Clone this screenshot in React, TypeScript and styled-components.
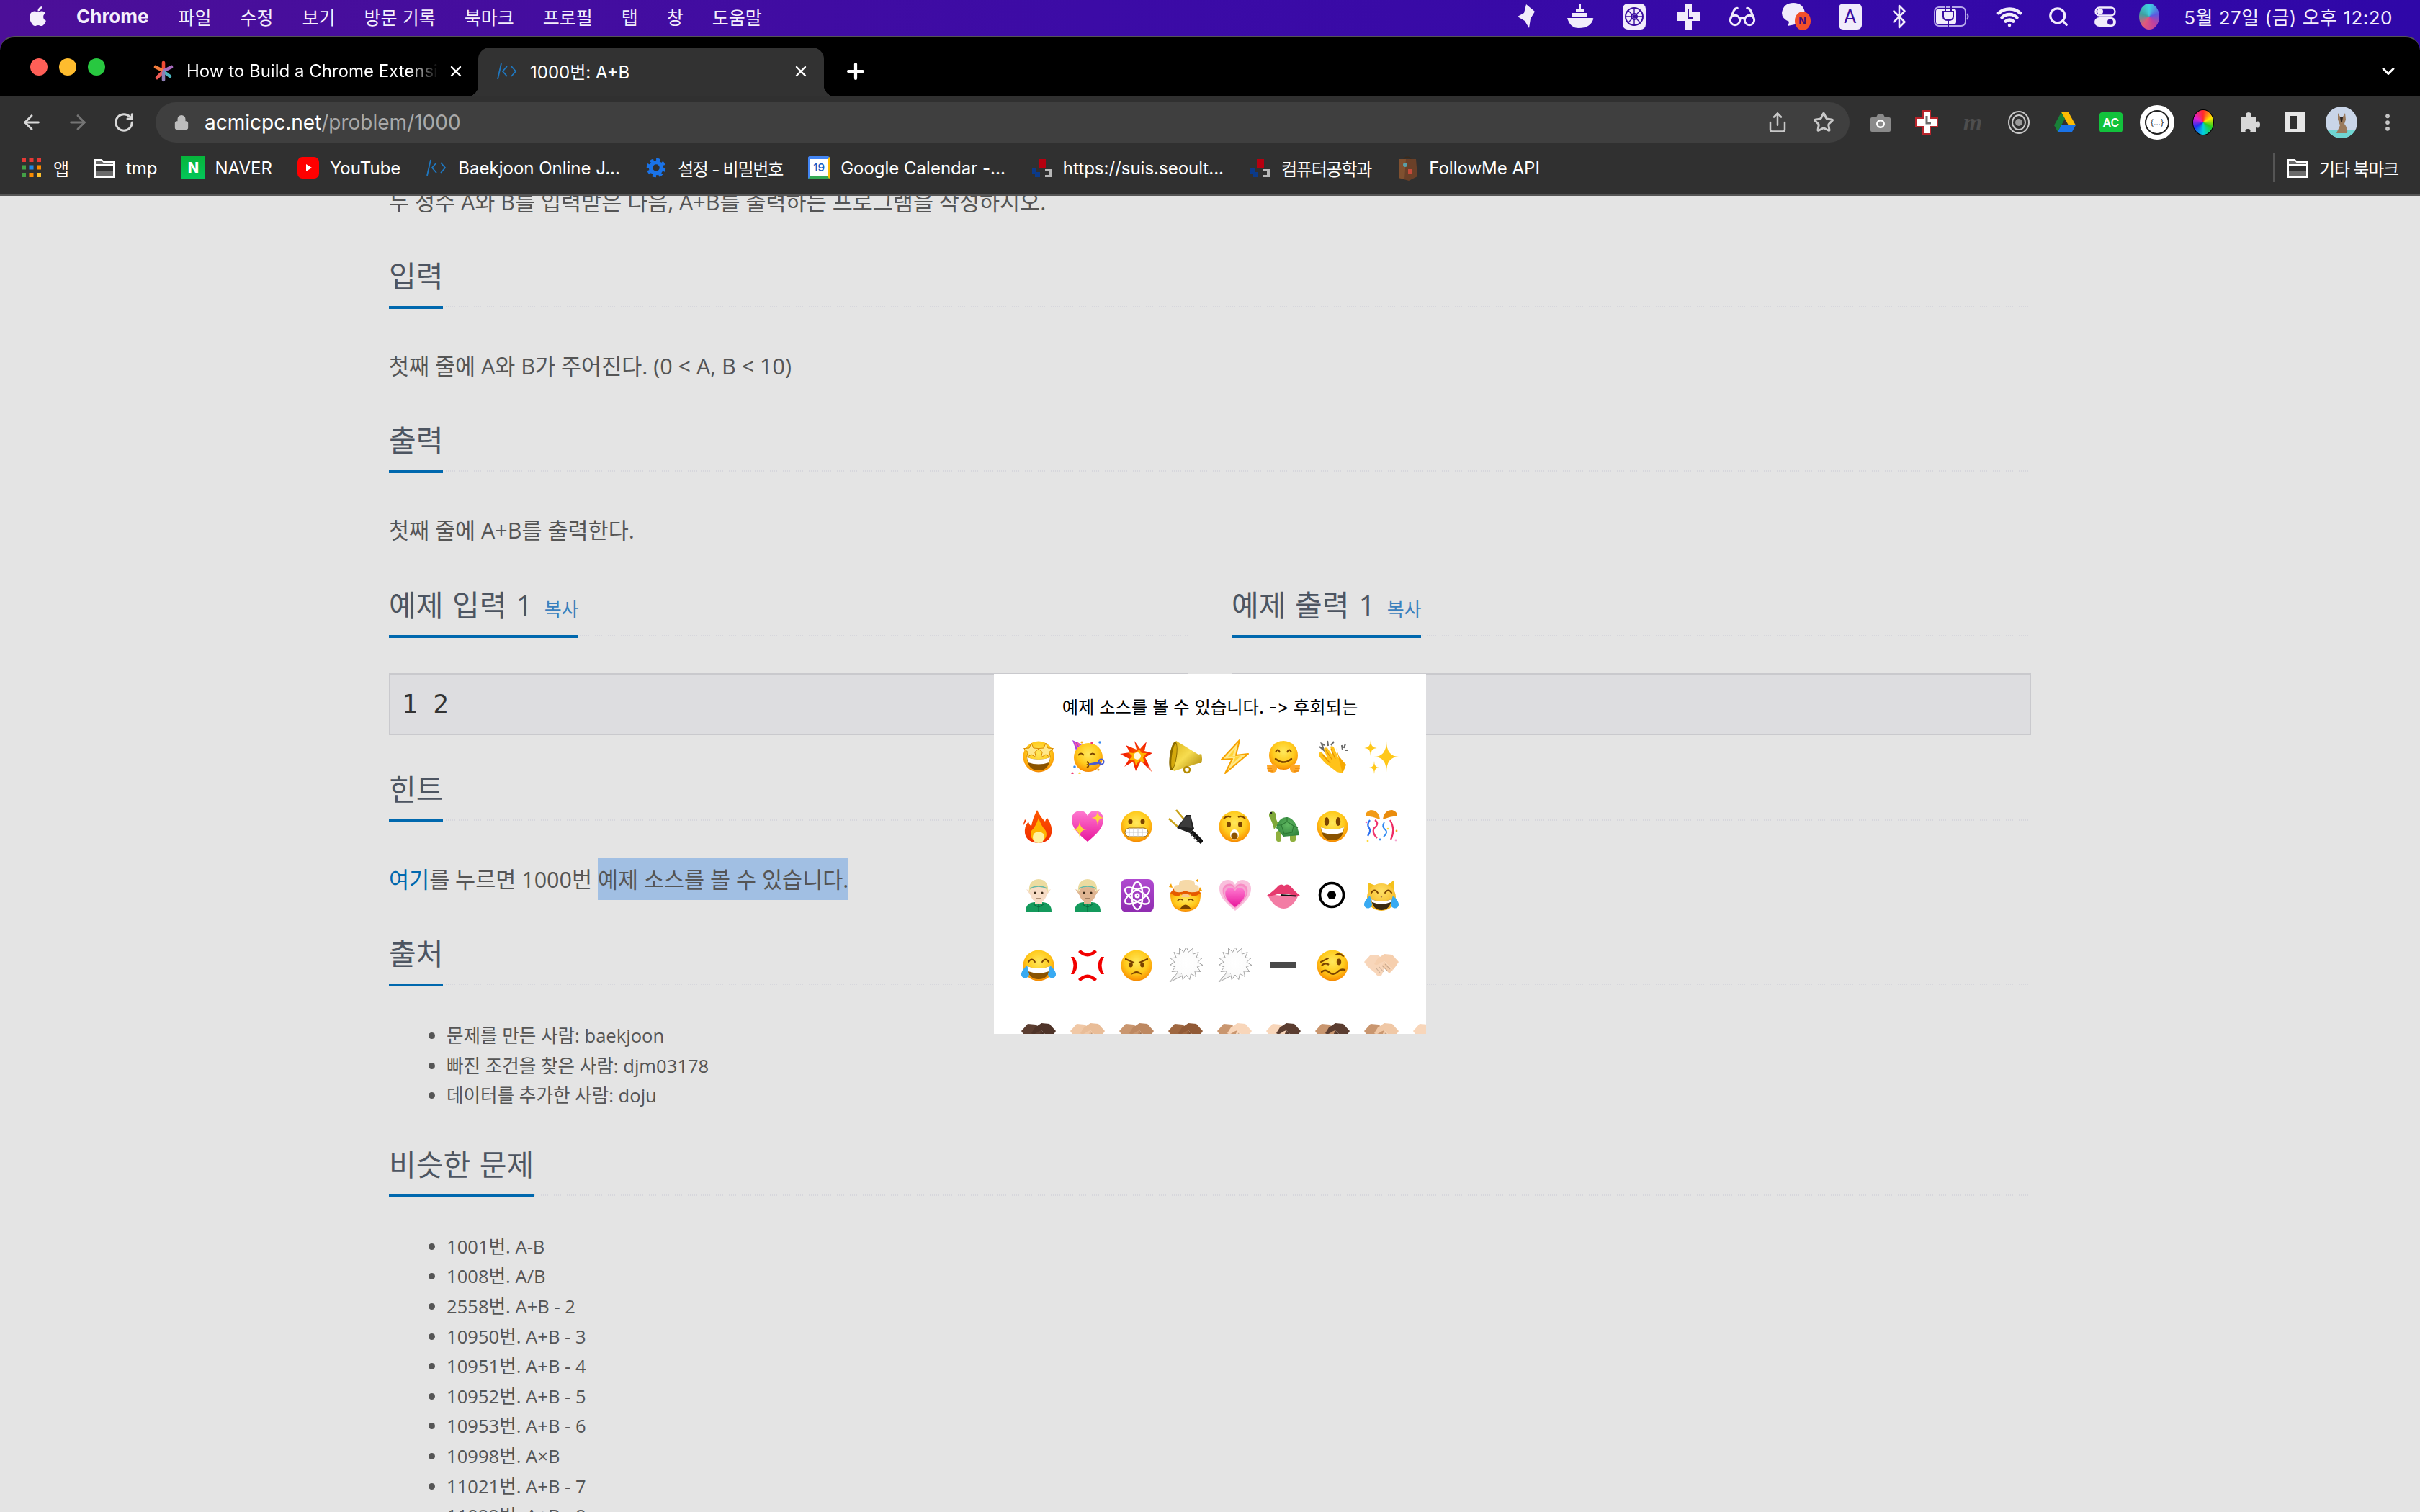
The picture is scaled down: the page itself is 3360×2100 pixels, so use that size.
import React from "react";
import styled, { createGlobalStyle } from "styled-components";
import { FaApple } from "react-icons/fa";
import {
  ArrowLeft,
  ArrowRight,
  Bluetooth,
  ChevronDown,
  EllipsisVertical,
  Glasses,
  Lock,
  Plus,
  RotateCw,
  Search,
  Share,
  Star,
  Wifi,
  X,
} from "lucide-react";

const UI_FONT = `"Inter", "Noto Sans CJK KR", sans-serif`;
const PAGE_FONT = `"Open Sans", "Noto Sans CJK KR", sans-serif`;

const GlobalStyle = createGlobalStyle`
  html, body {
    margin: 0;
    padding: 0;
    background: #e4e4e4;
  }
  * {
    box-sizing: border-box;
  }
`;

const pts = (cx: number, cy: number, R: number, r: number, n: number, rot = -90) =>
  Array.from({ length: n * 2 }, (_, i) => {
    const a = ((rot + (i * 180) / n) * Math.PI) / 180;
    const d = i % 2 ? r : R;
    return `${(cx + d * Math.cos(a)).toFixed(1)},${(cy + d * Math.sin(a)).toFixed(1)}`;
  }).join(" ");

const sparkle = (x: number, y: number, R: number) =>
  `M${x} ${y - R}Q${x} ${y} ${x + R * 0.8} ${y}Q${x} ${y} ${x} ${y + R}Q${x} ${y} ${x - R * 0.8} ${y}Q${x} ${y} ${x} ${y - R}Z`;

const HEART =
  "M24 45C8 32 2 24 2 14C2 6 8 2 14 2C19 2 22 5 24 9C26 5 29 2 34 2C40 2 46 6 46 14C46 24 40 32 24 45Z";

const BROWN = "#7a4300";

function Em({ children }: { children: React.ReactNode }) {
  return (
    <svg width="48" height="48" viewBox="0 0 48 48">
      {children}
    </svg>
  );
}

function Face({ children }: { children: React.ReactNode }) {
  return (
    <Em>
      <circle cx="24" cy="24" r="21.5" fill="url(#faceG)" />
      {children}
    </Em>
  );
}

const ArcEyes = ({ y = 19 }: { y?: number }) => (
  <path
    d={`M10 ${y}Q14.5 ${y - 7} 19 ${y}M29 ${y}Q33.5 ${y - 7} 38 ${y}`}
    fill="none"
    stroke={BROWN}
    strokeWidth="2"
    strokeLinecap="round"
  />
);

const OpenMouth = () => (
  <>
    <path d="M8 25Q24 31 40 25Q39 43 24 43Q9 43 8 25Z" fill="#8a5300" />
    <path d="M8 25Q24 31 40 25L38.5 32Q24 37 9.5 32Z" fill="#fff" />
  </>
);

const Tears = () => (
  <path d="M8 24Q10 30 10 33A5.5 5.5 0 1 1 0 35Q1 30 8 24ZM40 24Q38 30 38 33A5.5 5.5 0 1 0 48 35Q47 30 40 24Z" fill="#38aaf2" />
);

function Handshake({ a, b }: { a: string; b: string }) {
  return (
    <Em>
      <path d="M0 19L9 9L20 10L28 17L30 25L24 38Q18 40 15 34L5 26Z" fill={a} />
      <path d="M48 19L39 9L28 8L19 14L14 22Q18 25 23 20L28 18L40 30L44 25Z" fill={b} />
      <path d="M28 18L40 30L35 35L25 25Z" fill={b} />
      <path d="M17 28L22 34M21 26L27 33M25 24L32 31M29 22L36 29" stroke="#00000030" strokeWidth="1.1" />
    </Em>
  );
}

function Elf({ skin }: { skin: string }) {
  return (
    <Em>
      <path d="M6 46Q6 34 18 33H30Q42 34 42 46Z" fill="#149a5c" />
      <path d="M24 34V46M17 36L24 40L31 36" stroke="#0b6e41" strokeWidth="1.2" fill="none" />
      <path d="M7 15L14 18V25ZM41 15L34 18V25Z" fill={skin} />
      <rect x="19" y="26" width="10" height="10" fill={skin} />
      <ellipse cx="24" cy="20" rx="11.5" ry="13" fill={skin} />
      <path d="M11 20Q9 2 24 1Q39 2 37 20Q35 12 24 12Q13 12 11 20Z" fill="#ecdca0" />
      <path d="M12 14Q24 8 36 14" stroke="#65b8a8" strokeWidth="1.4" fill="none" />
      <circle cx="19" cy="20" r="1.6" fill="#3b2a18" />
      <circle cx="29" cy="20" r="1.6" fill="#3b2a18" />
      <path d="M21 28H27" stroke="#7a5a40" strokeWidth="1.2" />
    </Em>
  );
}

function Balloon() {
  return (
    <Em>
      <polygon points={pts(25, 21, 23, 16, 15)} fill="url(#balloonG)" stroke="#9a9a9a" strokeWidth="0.9" />
      <path d="M13 33L2 47L21 37Z" fill="#f4f4f4" />
      <path d="M13 34L2 47L20 38" fill="none" stroke="#9a9a9a" strokeWidth="0.9" />
    </Em>
  );
}

function MinusSign() {
  return (
    <Em>
      <rect x="6" y="19" width="36" height="9" fill="#4a4a4a" />
    </Em>
  );
}

const rowOne = [
  <Face key="star">
    <OpenMouth />
    <polygon points={pts(14, 16, 11, 5, 5)} fill="#ffe88a" stroke="#d98a00" strokeWidth="1" />
    <polygon points={pts(34, 16, 11, 5, 5)} fill="#ffe88a" stroke="#d98a00" strokeWidth="1" />
  </Face>,
  <Em key="party">
    <circle cx="25" cy="25" r="20" fill="url(#faceG)" />
    <path d="M3 1L16 7Q10 10 8 15Z" fill="#a83be0" />
    <path d="M6 3.5L10 11M10 4L12.5 9" stroke="#f45ba8" strokeWidth="1.8" />
    <path d="M11 22Q15 17 19 22M27 22Q31 17 35 22" fill="none" stroke={BROWN} strokeWidth="2" />
    <path d="M23 31Q27 33 24 35Q27 37 23 39" fill="none" stroke={BROWN} strokeWidth="2" />
    <path d="M26 35L42 32" stroke="#4a5bd0" strokeWidth="3" />
    <circle cx="43" cy="31" r="3.5" fill="none" stroke="#4a5bd0" strokeWidth="2" />
    <circle cx="6" cy="38" r="1.8" fill="#3a8af0" />
    <circle cx="3" cy="47" r="1.6" fill="#ef3b70" />
    <circle cx="16" cy="4" r="1.6" fill="#f5a623" />
    <circle cx="30" cy="5" r="1.8" fill="#ef3b70" />
    <circle cx="41" cy="4" r="1.8" fill="#3a8af0" />
    <circle cx="13" cy="47" r="1.6" fill="#ffd83a" />
    <circle cx="39" cy="42" r="1.6" fill="#f5a623" />
  </Em>,
  <Em key="boom">
    <polygon points="24,14 21,2 29,13 38,3 35,16 46,19 36,25 46,46 30,30 23,44 19,31 7,38 14,27 1,20 15,18 9,8" fill="url(#boomG)" />
    <polygon points="24,17 28,14 31,19 38,19 33,25 35,33 28,29 23,36 21,28 14,28 18,23 13,18 20,19" fill="#ffb400" />
    <circle cx="25" cy="23" r="5" fill="#fffbe0" />
  </Em>,
  <Em key="mega">
    <path d="M11 2L42 21L46 20Q48 27 46 33L42 33L8 44Q1 34 2 22Q4 8 11 2Z" fill="url(#goldG)" />
    <ellipse cx="7" cy="23" rx="5" ry="20" fill="#8a6a00" transform="rotate(8 7 23)" />
    <ellipse cx="8" cy="23" rx="3" ry="17" fill="#d4a90c" transform="rotate(8 8 23)" />
    <circle cx="26" cy="42" r="4" fill="none" stroke="#b48a00" strokeWidth="2.4" />
  </Em>,
  <Em key="bolt">
    <polygon points="31,1 6,28 21,27 11,47 43,20 26,22" fill="#ffe98a" stroke="#f7a300" strokeWidth="2" strokeLinejoin="round" />
    <polygon points="25,12 15,24 26,23 21,34 33,23 21,24" fill="#ffd53a" />
  </Em>,
  <Em key="hug">
    <circle cx="24" cy="22" r="20" fill="url(#faceG)" />
    <path d="M13 18Q16 11 19 18M29 18Q32 11 35 18" fill="none" stroke={BROWN} strokeWidth="2" />
    <path d="M13 27Q24 36 35 27" fill="none" stroke={BROWN} strokeWidth="2.4" strokeLinecap="round" />
    <path d="M1 36L10 36L9 32L15 38Q16 46 8 46L2 44ZM47 36L38 36L39 32L33 38Q32 46 40 46L46 44Z" fill="#ffa726" />
    <path d="M1 40H8M2 44H9M47 40H40M46 44H39" stroke="#e07b00" strokeWidth="1" />
  </Em>,
  <Em key="clap">
    <path d="M6 10L12 15L9 6L13 8M17 2L18 9M26 3L22 8M37 8L38 14M42 6L40 12M46 15L41 15" stroke="#6a6a6a" strokeWidth="2.2" fill="none" />
    <path d="M6 21Q5 17 9 18L17 26L12 14Q13 10 17 12L24 22L21 10Q24 8 26 11L32 25Q36 32 42 37L38 47L30 45Q21 38 14 33L5 23Z" fill="#ffc21a" />
    <path d="M15 15L24 29M22 13L28 27M10 21L21 33" stroke="#e59000" strokeWidth="1.2" fill="none" />
    <path d="M29 12L33 23Q38 30 43 35L38 47" fill="#f6a800" />
  </Em>,
  <Em key="sparkles">
    <path d={sparkle(31, 24, 22)} fill="#ffc81a" />
    <path d={sparkle(9, 12, 11)} fill="#ffc81a" />
    <path d={sparkle(14, 39, 9)} fill="#ffc81a" />
  </Em>,
];

const rowTwo = [
  <Em key="fire">
    <path d="M22 1Q26 10 33 17Q34 13 36 12Q44 24 42 33Q40 46 24 47Q7 46 5 33Q4 24 10 17Q11 22 14 23Q16 12 22 1Z" fill="url(#fireG)" />
    <path d="M5 14Q3 19 3 22L7 16Z" fill="#f23a00" />
    <path d="M24 12Q27 22 34 30Q38 42 24 46Q10 42 14 30Q20 24 24 12Z" fill="#ffb400" />
    <ellipse cx="24" cy="39" rx="8" ry="8" fill="#fff3a0" />
  </Em>,
  <Em key="sparkheart">
    <path d={HEART} fill="url(#heartG)" />
    <path d={sparkle(13, 28, 13)} fill="#ffd53a" />
    <path d={sparkle(38, 12, 11)} fill="#ffd53a" />
  </Em>,
  <Face key="grimace">
    <ellipse cx="15.5" cy="17" rx="3" ry="3.6" fill={BROWN} />
    <ellipse cx="32.5" cy="17" rx="3" ry="3.6" fill={BROWN} />
    <rect x="8" y="26" width="32" height="12" rx="6" fill="#fff" stroke="#9a6a10" strokeWidth="1" />
    <path d="M8 32H40M14 26V38M20 26V38M26 26V38M32 26V38" stroke="#c4c4c4" strokeWidth="0.9" />
  </Face>,
  <Em key="plug">
    <path d="M11 1L22 14M1 13L13 24" stroke="#c9a21a" strokeWidth="2.6" />
    <path d="M25 8L31 8L36 27L30 33L12 26Z" fill="#222" />
    <path d="M22 12L31 9L33 26L16 24Z" fill="#3c3c3c" />
    <path d="M32 31L47 46" stroke="#111" strokeWidth="6" />
    <path d="M35 33L32 37M39 37L36 41M43 41L40 45" stroke="#444" strokeWidth="2" />
  </Em>,
  <Face key="hushed">
    <path d="M9 13Q14 8 19 11M29 11Q34 8 39 13" fill="none" stroke={BROWN} strokeWidth="2" />
    <ellipse cx="16" cy="21" rx="3" ry="4" fill={BROWN} />
    <ellipse cx="32" cy="21" rx="3" ry="4" fill={BROWN} />
    <ellipse cx="24" cy="35" rx="6" ry="7" fill="#fff" />
    <ellipse cx="24" cy="37" rx="4.6" ry="4.6" fill="#8a5300" />
  </Face>,
  <Em key="turtle">
    <path d="M4 6Q10 0 13 6Q13 14 17 20L11 28Q8 16 4 10Z" fill="#7fa83a" />
    <circle cx="7" cy="5" r="1.3" fill="#222" />
    <rect x="14" y="30" width="7" height="15" rx="3" fill="#8fb03e" />
    <rect x="33" y="34" width="8" height="11" rx="3" fill="#8fb03e" />
    <path d="M14 26Q17 11 29 11Q42 13 46 36L24 38Z" fill="url(#shellG)" />
    <path d="M21 22L29 17L38 23L36 32L25 34ZM29 11V17M38 23L44 26M21 22L15 22" fill="none" stroke="#2d7a34" strokeWidth="1.1" />
  </Em>,
  <Face key="smiley">
    <ellipse cx="16" cy="17" rx="3.2" ry="6" fill={BROWN} />
    <ellipse cx="32" cy="17" rx="3.2" ry="6" fill={BROWN} />
    <OpenMouth />
  </Face>,
  <Em key="confetti">
    <path d="M22 14Q20 1 9 1Q2 3 2 9Q12 10 22 14Z" fill="#f29a14" />
    <path d="M26 14Q28 1 39 1Q46 3 46 9Q36 10 26 14Z" fill="#e98c0c" />
    <path d="M8 15Q3 22 7 26Q10 30 5 37" fill="none" stroke="#2a6ef0" strokeWidth="2.2" />
    <path d="M15 15Q22 20 14 26Q10 32 18 40" fill="none" stroke="#f0356e" strokeWidth="2.2" />
    <path d="M28 18Q24 24 29 28Q34 32 27 38" fill="none" stroke="#2a86f0" strokeWidth="1.8" />
    <path d="M36 15Q44 28 37 42" fill="none" stroke="#ef2b63" strokeWidth="2.2" />
    <circle cx="3" cy="18" r="1.3" fill="#ef6ab0" />
    <circle cx="5" cy="44" r="1.4" fill="#ffd83a" />
    <circle cx="22" cy="42" r="1.4" fill="#3a8af0" />
    <circle cx="45" cy="30" r="1.4" fill="#f5a623" />
    <circle cx="44" cy="43" r="1.4" fill="#f4a6cf" />
    <circle cx="33" cy="27" r="1.3" fill="#ffd83a" />
  </Em>,
];

const rowThree = [
  <Elf key="elf1" skin="#f7dcc6" />,
  <Elf key="elf2" skin="#dfb592" />,
  <Em key="atom">
    <rect x="2" y="1" width="46" height="46" rx="8" fill="url(#atomG)" />
    <g fill="none" stroke="#fff" strokeWidth="2.4" transform="translate(1 0)">
      <ellipse cx="24" cy="24" rx="7.5" ry="19" />
      <ellipse cx="24" cy="24" rx="7.5" ry="19" transform="rotate(60 24 24)" />
      <ellipse cx="24" cy="24" rx="7.5" ry="19" transform="rotate(-60 24 24)" />
      <circle cx="24" cy="24" r="2.4" />
    </g>
  </Em>,
  <Em key="mind">
    <path d="M3 20H45Q46 46 24 46Q2 46 3 20Z" fill="url(#faceG)" />
    <path d="M3 20Q12 28 18 22Q24 30 30 22Q36 28 45 20L40 14H8Z" fill="#e55a00" />
    <path d="M9 18Q5 9 15 9Q14 1 26 2Q38 1 37 9Q45 9 42 18Q30 21 24 17Q16 21 9 18Z" fill="#f6d9a8" />
    <path d="M18 26H30L28 21H20Z" fill="#f9c88a" />
    <path d="M13 31Q16 27 20 30M28 30Q32 27 35 31" fill="none" stroke={BROWN} strokeWidth="1.8" />
    <path d="M16 43Q24 30 32 43Z" fill="#7a4300" />
    <path d="M1 12L4 7L6 13ZM44 12L47 17L42 18ZM38 3L41 1L41 5Z" fill="#f5a000" />
  </Em>,
  <Em key="growheart">
    <g transform="translate(1 0)">
      <path d={HEART} fill="#f9bfdc" />
      <path d={HEART} fill="#f78cc4" transform="translate(5 6) scale(.79)" />
      <path d={HEART} fill="#f4a6d0" transform="translate(7 9) scale(.7)" />
      <path d={HEART} fill="url(#heartG)" transform="translate(9 12) scale(.62)" />
    </g>
  </Em>,
  <Em key="lips">
    <path d="M1 24Q12 16 17 10Q21 7 25 10Q29 7 33 10Q38 16 47 24Q40 26 24 21Q8 26 1 24Z" fill="#e63a6e" />
    <path d="M3 25Q14 22 25 23Q38 23 44 25Q36 42 24 42Q12 42 3 25Z" fill="#f37ca4" />
    <path d="M12 23Q24 18 40 25Q28 25 12 23Z" fill="#fff" />
    <path d="M20 23Q30 24 42 24.5" fill="none" stroke="#111" strokeWidth="1.8" />
  </Em>,
  <Em key="dot">
    <circle cx="23" cy="23" r="16.5" fill="none" stroke="#000" strokeWidth="3.6" />
    <circle cx="23" cy="23" r="6" fill="#000" />
  </Em>,
  <Em key="cat">
    <path d="M6 6L18 11L30 11L42 2L42 20L6 20Z" fill="#f5c11c" />
    <ellipse cx="24" cy="26" rx="20" ry="19" fill="url(#catG)" />
    <ArcEyes y={20} />
    <path d="M22 24H26L24 27Z" fill="#a3704a" />
    <path d="M10 29Q24 35 38 29Q36 44 24 44Q12 44 10 29Z" fill="#3a2a10" />
    <path d="M10 29Q24 35 38 29L37 33Q24 38 11 33Z" fill="#fff" />
    <Tears />
  </Em>,
];

const rowFour = [
  <Face key="joy">
    <ArcEyes />
    <OpenMouth />
    <Tears />
  </Face>,
  <Em key="anger">
    <path d="M14 2Q24 11 34 2L37 5Q24 18 11 5ZM14 46Q24 37 34 46L37 43Q24 30 11 43Z" fill="#f20000" />
    <path d="M5 12Q14 24 5 36L1 36Q8 24 1 12ZM43 12Q34 24 43 36L47 36Q40 24 47 12Z" fill="#f20000" />
  </Em>,
  <Face key="angry">
    <path d="M9 15L20 20M39 15L28 20" stroke={BROWN} strokeWidth="2.4" strokeLinecap="round" />
    <ellipse cx="16" cy="23" rx="2.8" ry="3.4" fill={BROWN} />
    <ellipse cx="32" cy="23" rx="2.8" ry="3.4" fill={BROWN} />
    <path d="M16 37Q24 27 32 37Q24 33 16 37Z" fill={BROWN} />
  </Face>,
  <Balloon key="b1" />,
  <Balloon key="b2" />,
  <MinusSign key="minus" />,
  <Face key="woozy">
    <path d="M8 19L18 14M29 9Q34 6 39 11" fill="none" stroke={BROWN} strokeWidth="2" strokeLinecap="round" />
    <path d="M9 24Q14 19 19 23" fill="none" stroke={BROWN} strokeWidth="2.4" />
    <ellipse cx="33" cy="19" rx="3.2" ry="4.4" fill={BROWN} />
    <path d="M9 33Q14 28 20 34Q26 38 31 33Q36 28 41 30" fill="none" stroke={BROWN} strokeWidth="2.4" strokeLinecap="round" />
  </Face>,
  <Handshake key="hs" a="#f8d6ba" b="#f6cfae" />,
];

const rowFive = [
  ["#5b3d30", "#4e3328"],
  ["#f0c8a6", "#e9bd98"],
  ["#c9966f", "#bd8861"],
  ["#9f6740", "#915a36"],
  ["#c9966f", "#f8d6ba"],
  ["#f8d6ba", "#5b3d30"],
  ["#c9966f", "#5b3d30"],
  ["#c9966f", "#f0c8a6"],
  ["#f8d6ba", "#f8d6ba"],
].map(([a, b], i) => <Handshake key={i} a={a} b={b} />);

function BojMark() {
  return (
    <svg width="30" height="24" viewBox="0 0 30 24" fill="none" stroke="#1f78c1" strokeWidth="1.8">
      <path d="M7 1L2 23" />
      <path d="M15 5L9 12L15 19" />
      <path d="M21 5L27 12L21 19" />
    </svg>
  );
}

function FolderIcon() {
  return (
    <svg width="32" height="32" viewBox="0 0 32 32">
      <path d="M3 5H12L15 8H29V29H3Z" fill="#6b6b6b" stroke="#fff" strokeWidth="2" />
      <path d="M3 12H29" stroke="#fff" strokeWidth="2" />
      <rect x="4" y="13" width="24" height="7" fill="#303030" />
    </svg>
  );
}

function SeoulTech() {
  return (
    <svg width="32" height="32" viewBox="0 0 32 32">
      <rect x="12" y="4" width="10" height="12" fill="#b5000f" />
      <path d="M3 16H9V22H14V29H7V24H3Z" fill="#0b3a8a" />
      <path d="M21 18H31V29H21Z" fill="#b8b8b8" />
      <rect x="21" y="21" width="5" height="5" fill="#303030" />
    </svg>
  );
}

function ToolbarIcons() {
  return (
    <>
      <ToolCell>
        <svg width="28" height="26" viewBox="0 0 28 26">
          <path d="M2 6H8L10 2H18L20 6H26Q28 6 28 8V24Q28 26 26 26H2Q0 26 0 24V8Q0 6 2 6Z" fill="#8a8a8a" />
          <circle cx="14" cy="15" r="6" fill="#fff" />
          <circle cx="14" cy="15" r="3.5" fill="#8a8a8a" />
        </svg>
      </ToolCell>
      <ToolCell>
        <svg width="32" height="34" viewBox="0 0 32 34">
          <path d="M11 1H21V11H31V23H21V33H11V23H1V11H11Z" fill="#fff" stroke="#b8252c" strokeWidth="2" />
          <path d="M16 8V18H22" stroke="#6b6b6b" strokeWidth="3" fill="none" />
        </svg>
      </ToolCell>
      <ToolCell>
        <FadedM>m</FadedM>
      </ToolCell>
      <ToolCell>
        <svg width="32" height="34" viewBox="0 0 32 34" fill="none" stroke="#c9c9c9">
          <ellipse cx="16" cy="17" rx="14" ry="15" strokeWidth="2" />
          <ellipse cx="16" cy="17" rx="9" ry="10" strokeWidth="2" />
          <circle cx="16" cy="17" r="5" fill="#9a9a9a" stroke="none" />
        </svg>
      </ToolCell>
      <ToolCell>
        <svg width="32" height="30" viewBox="0 0 32 30">
          <path d="M11 1H21L31 19H21Z" fill="#fbbc04" />
          <path d="M11 1L1 19L6 28L16 10Z" fill="#188038" />
          <path d="M6 28H26L31 19H11Z" fill="#1a73e8" />
        </svg>
      </ToolCell>
      <ToolCell>
        <AcBadge>AC</AcBadge>
      </ToolCell>
      <ToolCell>
        <JsonCircle>
          <JsonInner>{"{...}"}</JsonInner>
        </JsonCircle>
      </ToolCell>
      <ToolCell>
        <ColorWheel />
      </ToolCell>
      <ToolCell>
        <svg width="30" height="30" viewBox="0 0 30 30">
          <path d="M4 7H11Q9 1 14 1Q19 1 17 7H24V14Q30 12 30 18Q30 24 24 22V29H16Q18 24 13 24Q8 24 10 29H4Z" fill="#d8d8d8" />
        </svg>
      </ToolCell>
      <ToolCell>
        <svg width="28" height="28" viewBox="0 0 28 28">
          <path d="M0 0H28V28H0Z" fill="#e6e6e6" />
          <rect x="6" y="5" width="10" height="18" fill="#303030" />
        </svg>
      </ToolCell>
      <ToolCell>
        <Avatar>
          <svg width="44" height="44" viewBox="0 0 44 44">
            <rect width="44" height="44" fill="#c9d5e8" />
            <rect y="33" width="44" height="11" fill="#6fd6d2" />
            <path d="M17 9L20 14H24L27 9L28 18L26 24Q31 30 30 37H15L20 26L17 18Z" fill="#9a7a5c" />
            <path d="M20 15H24L23 21H21Z" fill="#2c2420" />
          </svg>
        </Avatar>
      </ToolCell>
      <ToolCell>
        <EllipsisVertical size={30} color="#c8c8c8" strokeWidth={2.6} />
      </ToolCell>
    </>
  );
}

function Heading({ children, small }: { children: string; small?: boolean }) {
  return (
    <HeadRow>
      <HeadTitle>
        {children}
        {small && <CopyLink>복사</CopyLink>}
      </HeadTitle>
    </HeadRow>
  );
}

function App() {
  const menus = ["파일", "수정", "보기", "방문 기록", "북마크", "프로필", "탭", "창", "도움말"];
  const credits = ["문제를 만든 사람: baekjoon", "빠진 조건을 찾은 사람: djm03178", "데이터를 추가한 사람: doju"];
  const similar = [
    "1001번. A-B",
    "1008번. A/B",
    "2558번. A+B - 2",
    "10950번. A+B - 3",
    "10951번. A+B - 4",
    "10952번. A+B - 5",
    "10953번. A+B - 6",
    "10998번. A×B",
    "11021번. A+B - 7",
    "11022번. A+B - 8",
  ];
  const bookmarks = [
    {
      label: "앱",
      icon: (
        <svg width="28" height="28" viewBox="0 0 28 28">
          {["#e53935", "#e53935", "#e53935", "#43a047", "#1e88e5", "#fb8c00", "#43a047", "#fb8c00", "#fbc02d"].map((c, i) => (
            <rect key={i} x={(i % 3) * 10.5} y={Math.floor(i / 3) * 10.5} width="6" height="6" fill={c} />
          ))}
        </svg>
      ),
    },
    { label: "tmp", icon: <FolderIcon /> },
    { label: "NAVER", icon: <NaverBox>N</NaverBox> },
    {
      label: "YouTube",
      icon: (
        <svg width="32" height="32" viewBox="0 0 32 32">
          <rect x="1" y="1" width="30" height="30" rx="7" fill="#f00" />
          <path d="M13 11L21 16L13 21Z" fill="#fff" />
        </svg>
      ),
    },
    { label: "Baekjoon Online J...", icon: <BojMark /> },
    {
      label: "설정 - 비밀번호",
      icon: (
        <svg width="30" height="32" viewBox="0 0 30 32" fill="none" stroke="#1a73e8">
          <circle cx="15" cy="16" r="11" strokeWidth="4.5" strokeDasharray="5 3.6" />
          <circle cx="15" cy="16" r="7.5" strokeWidth="5.5" />
        </svg>
      ),
    },
    { label: "Google Calendar -...", icon: <CalendarBox>19</CalendarBox> },
    { label: "https://suis.seoult...", icon: <SeoulTech /> },
    { label: "컴퓨터공학과", icon: <SeoulTech /> },
    {
      label: "FollowMe API",
      icon: (
        <svg width="32" height="36" viewBox="0 0 32 36">
          <path d="M11 6Q16 0 21 6" fill="none" stroke="#3a2a1c" strokeWidth="1.6" />
          <path d="M4 6H28L30 30L18 36L4 32Z" fill="#6a4028" />
          <path d="M4 6H14L12 34L4 32Z" fill="#80502f" />
          <circle cx="13" cy="14" r="3" fill="#5aa0a8" />
          <rect x="17" y="20" width="5" height="7" fill="#c44a3a" />
        </svg>
      ),
    },
  ];
  const statusIcons = [
    {
      w: 75,
      icon: (
        <svg width="28" height="34" viewBox="0 0 28 34" fill="#f1ecfb">
          <path d="M14 0L26 10L20 20L18 33L12 23L2 17L11 12Z" />
        </svg>
      ),
    },
    {
      w: 75,
      icon: (
        <svg width="38" height="34" viewBox="0 0 38 34" fill="#f1ecfb">
          <path d="M17 0H20V6H17ZM13 7H24V11H13ZM7 12H28V18H7ZM1 19H36Q38 19 37 21Q33 33 17 33Q5 33 1 19Z" />
        </svg>
      ),
    },
    {
      w: 75,
      icon: (
        <svg width="32" height="36" viewBox="0 0 32 36">
          <rect x="0" y="0" width="32" height="36" rx="7" fill="#f1ecfb" />
          <circle cx="16" cy="18" r="12" fill="none" stroke="#3a0da0" strokeWidth="2" />
          <circle cx="16" cy="18" r="4" fill="none" stroke="#3a0da0" strokeWidth="2" />
          <path d="M16 6V30M4 18H28M8 10L24 26M24 10L8 26" stroke="#3a0da0" strokeWidth="1.4" />
        </svg>
      ),
    },
    {
      w: 75,
      icon: (
        <svg width="32" height="36" viewBox="0 0 32 36">
          <path d="M11 0H21V12H32V24H21V36H11V24H0V12H11Z" fill="#f1ecfb" />
          <path d="M16 8V20H23" stroke="#3a0da0" strokeWidth="2" fill="none" />
        </svg>
      ),
    },
    { w: 75, icon: <Glasses size={40} color="#f1ecfb" strokeWidth={1.8} /> },
    {
      w: 75,
      icon: (
        <BubbleIcon>
          <svg width="36" height="36" viewBox="0 0 36 36">
            <path d="M16 0Q30 0 32 14L18 30L8 32Q10 28 10 26Q0 22 0 14Q2 0 16 0Z" fill="#f1ecfb" />
          </svg>
          <BubbleBadge>N</BubbleBadge>
        </BubbleIcon>
      ),
    },
    { w: 75, icon: <LetterBox>A</LetterBox> },
    { w: 62, icon: <Bluetooth size={36} color="#f1ecfb" strokeWidth={1.7} /> },
    {
      w: 84,
      icon: (
        <svg width="50" height="28" viewBox="0 0 50 28">
          <rect x="1" y="1" width="43" height="26" rx="6" fill="none" stroke="#b7a9ea" strokeWidth="2" />
          <rect x="3" y="3" width="28" height="22" rx="4" fill="#f1ecfb" />
          <path d="M46 10Q49 14 46 18" fill="none" stroke="#b7a9ea" strokeWidth="2" />
          <path d="M16 0V7M24 0V7M13 7H27V14Q27 19 20 19Q13 19 13 14ZM20 19V28" stroke="#3a0da0" strokeWidth="2" fill="#f1ecfb" />
        </svg>
      ),
    },
    { w: 76, icon: <Wifi size={36} color="#f1ecfb" strokeWidth={3} /> },
    { w: 60, icon: <Search size={30} color="#f1ecfb" strokeWidth={2.6} /> },
    {
      w: 70,
      icon: (
        <svg width="30" height="28" viewBox="0 0 30 28">
          <rect x="1.5" y="1.5" width="27" height="11" rx="5.5" fill="none" stroke="#f1ecfb" strokeWidth="2.4" />
          <circle cx="8" cy="7" r="4" fill="#f1ecfb" />
          <rect x="0" y="15" width="30" height="13" rx="6.5" fill="#f1ecfb" />
          <circle cx="22" cy="21.5" r="4" fill="#3a0da0" />
        </svg>
      ),
    },
    { w: 52, icon: <SiriDot /> },
  ];
  return (
    <Screen>
      <GlobalStyle />
      <DefsHolder width="0" height="0">
        <defs>
          <radialGradient id="faceG" cx=".5" cy=".38" r=".62">
            <stop offset="0" stopColor="#ffe85c" />
            <stop offset=".6" stopColor="#ffca1c" />
            <stop offset=".92" stopColor="#fb9a06" />
            <stop offset="1" stopColor="#f08400" />
          </radialGradient>
          <radialGradient id="catG" cx=".5" cy=".3" r=".7">
            <stop offset="0" stopColor="#ffe066" />
            <stop offset="1" stopColor="#f2b018" />
          </radialGradient>
          <radialGradient id="boomG" cx=".55" cy=".45" r=".6">
            <stop offset="0" stopColor="#ff6a00" />
            <stop offset=".7" stopColor="#f21b00" />
            <stop offset="1" stopColor="#ff8a70" />
          </radialGradient>
          <linearGradient id="goldG" x1="0" y1="0" x2="1" y2="1">
            <stop offset="0" stopColor="#d8ad10" />
            <stop offset=".5" stopColor="#f7dd50" />
            <stop offset="1" stopColor="#a47e00" />
          </linearGradient>
          <linearGradient id="fireG" x1="0" y1="0" x2="0" y2="1">
            <stop offset="0" stopColor="#ff5a00" />
            <stop offset="1" stopColor="#f02a00" />
          </linearGradient>
          <linearGradient id="heartG" x1="0" y1="0" x2="0" y2="1">
            <stop offset="0" stopColor="#ff7ad0" />
            <stop offset="1" stopColor="#e8169c" />
          </linearGradient>
          <radialGradient id="shellG" cx=".5" cy=".4" r=".7">
            <stop offset="0" stopColor="#5fb860" />
            <stop offset="1" stopColor="#2d7f3a" />
          </radialGradient>
          <linearGradient id="atomG" x1="0" y1="0" x2="0" y2="1">
            <stop offset="0" stopColor="#b04ad0" />
            <stop offset="1" stopColor="#8f2cb0" />
          </linearGradient>
          <radialGradient id="balloonG" cx=".5" cy=".5" r=".6">
            <stop offset="0" stopColor="#ffffff" />
            <stop offset=".75" stopColor="#fbfbfb" />
            <stop offset="1" stopColor="#dedede" />
          </radialGradient>
        </defs>
      </DefsHolder>

      <MenuBar>
        <FaApple size={31} color="#f4effc" />
        <AppName>Chrome</AppName>
        {menus.map((m) => (
          <MenuItem key={m}>{m}</MenuItem>
        ))}
        <StatusArea>
          {statusIcons.map((s, i) => (
            <StatusCell key={i} $w={s.w}>
              {s.icon}
            </StatusCell>
          ))}
          <Clock>5월 27일 (금) 오후 12:20</Clock>
        </StatusArea>
      </MenuBar>

      <TabStrip>
        <Lights>
          <Light $c="#ff5f57" />
          <Light $c="#febc2e" />
          <Light $c="#28c840" />
        </Lights>
        <Tab>
          <FavSlot>
            <svg width="30" height="30" viewBox="0 0 30 30" strokeWidth="4.6" strokeLinecap="round">
              <path d="M15 3V14" stroke="#ef4a35" />
              <path d="M4 9L14 14" stroke="#f47d3c" />
              <path d="M26 9L16 14" stroke="#a86bbd" />
              <path d="M6 24L14 16" stroke="#ee5a56" />
              <path d="M24 22L16 16" stroke="#4bb3bd" />
              <path d="M15 17V27" stroke="#8e7fb5" />
            </svg>
          </FavSlot>
          <TabLabel $fade>How to Build a Chrome Extension</TabLabel>
          <X size={24} color="#fff" strokeWidth={2.4} />
        </Tab>
        <Tab $active>
          <FavSlot>
            <BojMark />
          </FavSlot>
          <TabLabel>1000번: A+B</TabLabel>
          <X size={24} color="#fff" strokeWidth={2.4} />
        </Tab>
        <NewTab>
          <Plus size={34} color="#fff" strokeWidth={3} />
        </NewTab>
        <TabMenu>
          <ChevronDown size={28} color="#fff" strokeWidth={2.6} />
        </TabMenu>
      </TabStrip>

      <NavBar>
        <NavCell>
          <ArrowLeft size={32} color="#d8d8d8" strokeWidth={2.2} />
        </NavCell>
        <NavCell>
          <ArrowRight size={32} color="#747474" strokeWidth={2.2} />
        </NavCell>
        <NavCell>
          <RotateCw size={30} color="#d8d8d8" strokeWidth={2.4} />
        </NavCell>
        <Omnibox>
          <Lock size={22} color="#bdbdbd" fill="#bdbdbd" strokeWidth={2} />
          <UrlText>
            acmicpc.net<UrlPath>/problem/1000</UrlPath>
          </UrlText>
          <OmniCell>
            <Share size={30} color="#c8c8c8" strokeWidth={2} />
          </OmniCell>
          <OmniCell>
            <Star size={30} color="#c8c8c8" strokeWidth={2.4} />
          </OmniCell>
        </Omnibox>
        <ToolGroup>
          <ToolbarIcons />
        </ToolGroup>
      </NavBar>

      <BookmarkBar>
        {bookmarks.map((b) => (
          <Bookmark key={b.label} $ko={/[가-힣]/.test(b.label)}>
            <BookmarkIcon>{b.icon}</BookmarkIcon>
            {b.label}
          </Bookmark>
        ))}
        <BookmarkEnd>
          <BookmarkSep />
          <Bookmark $ko>
            <BookmarkIcon>
              <FolderIcon />
            </BookmarkIcon>
            기타 북마크
          </Bookmark>
        </BookmarkEnd>
      </BookmarkBar>

      <PageView>
        <Content>
          <CutLine>두 정수 A와 B를 입력받은 다음, A+B를 출력하는 프로그램을 작성하시오.</CutLine>

          <Section $top={52}>
            <Heading>입력</Heading>
            <Para>첫째 줄에 A와 B가 주어진다. (0 &lt; A, B &lt; 10)</Para>
          </Section>

          <Section $top={52}>
            <Heading>출력</Heading>
            <Para>첫째 줄에 A+B를 출력한다.</Para>
          </Section>

          <SampleGrid>
            <div>
              <Heading small>예제 입력 1</Heading>
              <SampleBox>1 2</SampleBox>
            </div>
            <div>
              <Heading small>예제 출력 1</Heading>
              <SampleBox />
            </div>
          </SampleGrid>

          <Section $top={47}>
            <Heading>힌트</Heading>
            <Para>
              <TextLink>여기</TextLink>를 누르면 1000번 <Selected>예제 소스를 볼 수 있습니다.</Selected>
            </Para>
          </Section>

          <Section $top={52}>
            <Heading>출처</Heading>
            <BulletList>
              {credits.map((c) => (
                <li key={c}>{c}</li>
              ))}
            </BulletList>
          </Section>

          <Section $top={46}>
            <Heading>비슷한 문제</Heading>
            <BulletList>
              {similar.map((c) => (
                <li key={c}>{c}</li>
              ))}
            </BulletList>
          </Section>
        </Content>

        <Popup>
          <PopupTitle>예제 소스를 볼 수 있습니다. -&gt; 후회되는</PopupTitle>
          {[rowOne, rowTwo, rowThree, rowFour, rowFive].map((row, i) => (
            <EmojiRow key={i}>
              {row.map((e, j) => (
                <EmojiCell key={j}>{e}</EmojiCell>
              ))}
            </EmojiRow>
          ))}
        </Popup>
      </PageView>
    </Screen>
  );
}

const Screen = styled.div`
  width: 3360px;
  height: 2100px;
  overflow: hidden;
  position: relative;
  background: linear-gradient(90deg, #4c0f98 0%, #3c0ba6 45%, #2f07a8 100%);
  font-family: ${UI_FONT};
`;
const DefsHolder = styled.svg`
  position: absolute;
`;
const MenuBar = styled.div`
  height: 50px;
  padding-bottom: 5px;
  display: flex;
  align-items: center;
  padding-left: 37px;
  color: #f4effc;
  font-size: 25px;
`;
const AppName = styled.span`
  font-weight: 700;
  font-size: 26px;
  margin-left: 38px;
  margin-right: 41px;
`;
const MenuItem = styled.span`
  margin-right: 40px;
  white-space: nowrap;
`;
const StatusArea = styled.div`
  margin-left: auto;
  display: flex;
  align-items: center;
  padding-right: 38px;
`;
const StatusCell = styled.div<{ $w: number }>`
  width: ${(p) => p.$w}px;
  display: flex;
  justify-content: center;
  align-items: center;
`;
const Clock = styled.span`
  margin-left: 22px;
  font-size: 26px;
  letter-spacing: 0.5px;
  white-space: nowrap;
`;
const LetterBox = styled.div`
  width: 32px;
  height: 36px;
  border-radius: 6px;
  background: #f1ecfb;
  color: #3a0da0;
  font-size: 26px;
  line-height: 36px;
  text-align: center;
`;
const BubbleIcon = styled.div`
  position: relative;
  width: 40px;
  height: 38px;
`;
const BubbleBadge = styled.span`
  position: absolute;
  right: 0;
  bottom: 0;
  width: 22px;
  height: 26px;
  border-radius: 50%;
  background: #f2502a;
  color: #40107a;
  font-size: 14px;
  font-weight: 700;
  line-height: 26px;
  text-align: center;
`;
const SiriDot = styled.div`
  width: 28px;
  height: 36px;
  border-radius: 50%;
  background: conic-gradient(#3fd0e0, #5a5ae0, #c03fa0, #e05a7a, #3fa0a0, #3fd0e0);
`;
const TabStrip = styled.div`
  height: 84px;
  background: #000;
  border-top: 2px solid #555;
  border-radius: 20px 20px 0 0;
  display: flex;
  align-items: flex-end;
`;
const Lights = styled.div`
  align-self: flex-start;
  margin: 29px 52px 0 42px;
  display: flex;
  gap: 16px;
`;
const Light = styled.span<{ $c: string }>`
  width: 24px;
  height: 24px;
  border-radius: 50%;
  background: ${(p) => p.$c};
`;
const Tab = styled.div<{ $active?: boolean }>`
  width: ${(p) => (p.$active ? 480 : 466)}px;
  height: 68px;
  display: flex;
  align-items: center;
  padding: 0 ${(p) => (p.$active ? 20 : 19)}px 3px ${(p) => (p.$active ? 25 : 14)}px;
  color: #fff;
  font-size: 24px;
  position: relative;
  background: ${(p) => (p.$active ? "#323232" : "transparent")};
  border-radius: 16px 16px 0 0;
  ${(p) =>
    p.$active &&
    `
    &::before, &::after {
      content: "";
      position: absolute;
      bottom: 0;
      width: 16px;
      height: 16px;
    }
    &::before {
      left: -16px;
      background: radial-gradient(circle at 0 0, transparent 16px, #323232 16.5px);
    }
    &::after {
      right: -16px;
      background: radial-gradient(circle at 100% 0, transparent 16px, #323232 16.5px);
    }
  `}
`;
const FavSlot = styled.span`
  width: 30px;
  margin-right: 17px;
  display: flex;
  justify-content: center;
  flex-shrink: 0;
`;
const TabLabel = styled.span<{ $fade?: boolean }>`
  flex: 1;
  min-width: 0;
  overflow: hidden;
  white-space: nowrap;
  ${(p) =>
    p.$fade &&
    `
    margin-right: 12px;
    -webkit-mask-image: linear-gradient(90deg, #000 88%, transparent 100%);
    mask-image: linear-gradient(90deg, #000 88%, transparent 100%);
  `}
`;
const NewTab = styled.div`
  height: 68px;
  margin-left: 27px;
  padding-bottom: 3px;
  display: flex;
  align-items: center;
`;
const TabMenu = styled.div`
  height: 68px;
  margin-left: auto;
  padding: 0 30px 3px 0;
  display: flex;
  align-items: center;
`;
const NavBar = styled.div`
  height: 64px;
  padding: 8px 0 0 12px;
  background: #303030;
  display: flex;
`;
const NavCell = styled.div`
  width: 64px;
  height: 56px;
  display: flex;
  align-items: center;
  justify-content: center;
`;
const Omnibox = styled.div`
  width: 2352px;
  height: 56px;
  margin-left: 12px;
  padding: 0 4px 0 25px;
  border-radius: 28px;
  background: #3f3f3f;
  display: flex;
  align-items: center;
`;
const UrlText = styled.span`
  flex: 1;
  margin-left: 21px;
  color: #fff;
  font-size: 28px;
`;
const UrlPath = styled.span`
  color: #a9a9a9;
`;
const OmniCell = styled.div`
  width: 64px;
  display: flex;
  justify-content: center;
`;
const ToolGroup = styled.div`
  margin-left: 11px;
  display: flex;
`;
const ToolCell = styled.div`
  width: 64px;
  height: 56px;
  display: flex;
  align-items: center;
  justify-content: center;
`;
const FadedM = styled.span`
  color: #4e4e4e;
  font: italic 700 34px "Liberation Serif", serif;
`;
const AcBadge = styled.div`
  width: 32px;
  height: 28px;
  border-radius: 4px;
  background: #12c23c;
  color: #fff;
  font-size: 16px;
  line-height: 28px;
  font-weight: 600;
  text-align: center;
`;
const JsonCircle = styled.div`
  width: 48px;
  height: 48px;
  border-radius: 50%;
  background: #fff;
  display: flex;
  align-items: center;
  justify-content: center;
`;
const JsonInner = styled.div`
  width: 34px;
  height: 34px;
  border-radius: 50%;
  border: 2px solid #222;
  color: #222;
  font-size: 11px;
  line-height: 30px;
  text-align: center;
`;
const ColorWheel = styled.div`
  width: 30px;
  height: 36px;
  border-radius: 50%;
  background: conic-gradient(#ff2a2a, #ffe600, #22d022, #00d0e0, #2030f0, #e020d0, #ff2a2a);
  border: 1px solid #000;
`;
const Avatar = styled.div`
  width: 44px;
  height: 44px;
  border-radius: 50%;
  overflow: hidden;
`;
const NaverBox = styled.div`
  width: 32px;
  height: 32px;
  background: linear-gradient(180deg, #07b53b, #03c75a);
  color: #fff;
  font-size: 20px;
  font-weight: 800;
  line-height: 32px;
  text-align: center;
`;
const CalendarBox = styled.div`
  width: 30px;
  height: 32px;
  border-top: 4px solid #4285f4;
  border-bottom: 4px solid #34a853;
  border-left: 3px solid #4285f4;
  border-right: 3px solid #fbbc04;
  border-radius: 3px;
  background: #fff;
  color: #1a5fc8;
  font-size: 15px;
  font-weight: 600;
  line-height: 24px;
  text-align: center;
`;
const BookmarkBar = styled.div`
  height: 74px;
  padding: 0 0 2px 28px;
  background: #303030;
  border-bottom: 2px solid #555;
  display: flex;
  align-items: center;
  gap: 34px;
`;
const Bookmark = styled.div<{ $ko?: boolean }>`
  display: flex;
  align-items: center;
  gap: 14px;
  color: #fff;
  font-size: 24px;
  letter-spacing: ${(p) => (p.$ko ? "-1.2px" : "0")};
  white-space: nowrap;
`;
const BookmarkIcon = styled.span`
  width: 32px;
  height: 36px;
  display: flex;
  align-items: center;
  justify-content: center;
`;
const BookmarkEnd = styled.div`
  margin-left: auto;
  padding-right: 30px;
  display: flex;
  align-items: center;
  gap: 16px;
`;
const BookmarkSep = styled.span`
  width: 2px;
  height: 40px;
  background: #555;
`;
const PageView = styled.div`
  height: 1828px;
  background: #e4e4e4;
  overflow: hidden;
  position: relative;
  font-family: ${PAGE_FONT};
  color: #555;
`;
const Content = styled.div`
  width: 2280px;
  margin-left: 540px;
`;
const CutLine = styled.p`
  margin: -15px 0 0;
  height: 46px;
  font-size: 30.5px;
  line-height: 46px;
  white-space: nowrap;
`;
const Section = styled.section<{ $top: number }>`
  margin-top: ${(p) => p.$top}px;
`;
const HeadRow = styled.div`
  height: 74px;
  display: flex;
  background: radial-gradient(circle, #d6d6dc 1px, transparent 1.1px) 0 70px / 3px 2px repeat-x;
`;
const HeadTitle = styled.h2`
  margin: 0;
  height: 74px;
  padding-bottom: 14px;
  border-bottom: 4px solid #0068ae;
  font-size: 41px;
  font-weight: 400;
  line-height: 56px;
  word-spacing: 2px;
  color: #4d5561;
  white-space: nowrap;
`;
const CopyLink = styled.a`
  margin-left: 16px;
  font-size: 26px;
  color: #3a7fbd;
`;
const Para = styled.p`
  margin: 56px 0 0;
  font-size: 30.5px;
  line-height: 46px;
  white-space: nowrap;
`;
const TextLink = styled.a`
  color: #0068ae;
`;
const Selected = styled.span`
  padding: 8px 0;
  background: #a1bfe3;
`;
const SampleGrid = styled.div`
  margin-top: 53px;
  display: grid;
  grid-template-columns: 1110px 1110px;
  column-gap: 60px;
`;
const SampleBox = styled.pre`
  margin: 49px 0 0;
  height: 86px;
  padding: 0 0 0 16px;
  background: #dddde0;
  border: 2px solid #c9c9cd;
  font-family: "DejaVu Sans Mono", monospace;
  font-size: 36px;
  line-height: 82px;
  color: #333;
`;
const BulletList = styled.ul`
  margin: 48px 0 0;
  padding: 0 0 0 80px;
  font-size: 25.6px;
  line-height: 41.6px;
  color: #555;
`;
const Popup = styled.div`
  position: absolute;
  left: 1380px;
  top: 664px;
  width: 600px;
  height: 500px;
  overflow: hidden;
  background: #fff;
  padding: 26px 0 0 28px;
`;
const PopupTitle = styled.div`
  height: 41px;
  margin-left: -28px;
  color: #000;
  font-family: ${UI_FONT};
  font-size: 24.3px;
  line-height: 40px;
  text-align: center;
`;
const EmojiRow = styled.div`
  height: 96.5px;
  display: flex;
`;
const EmojiCell = styled.div`
  width: 68px;
  flex-shrink: 0;
  display: flex;
  align-items: center;
  justify-content: center;
`;

export default App;
